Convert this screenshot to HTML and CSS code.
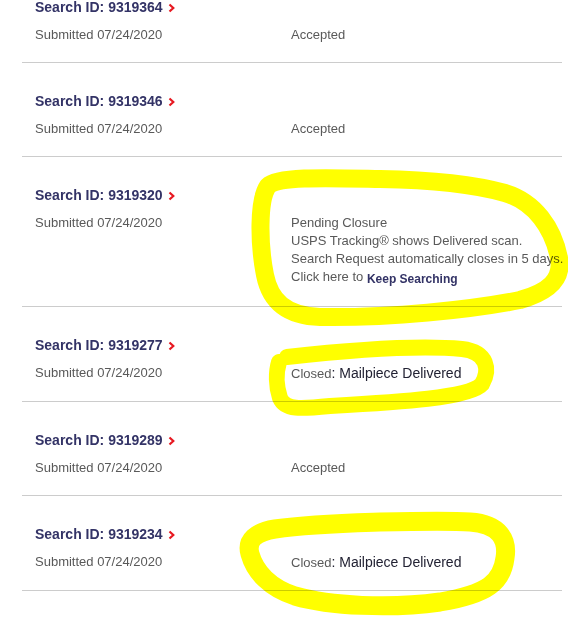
FILE: index.html
```html
<!DOCTYPE html>
<html>
<head>
<meta charset="utf-8">
<link rel="stylesheet" href="styles.css">
</head>
<body>
<div class="list">
  <div class="row">
    <div class="title">Search ID: 9319364<svg class="chev" width="7" height="10" viewBox="0 0 7 10"><path d="M1.5 1.5 L5.3 5 L1.5 8.5" /></svg></div>
    <div class="sub">Submitted 07/24/2020</div>
    <div class="status">Accepted</div>
  </div>
  <div class="row">
    <div class="title">Search ID: 9319346<svg class="chev" width="7" height="10" viewBox="0 0 7 10"><path d="M1.5 1.5 L5.3 5 L1.5 8.5" /></svg></div>
    <div class="sub">Submitted 07/24/2020</div>
    <div class="status">Accepted</div>
  </div>
  <div class="row">
    <div class="title">Search ID: 9319320<svg class="chev" width="7" height="10" viewBox="0 0 7 10"><path d="M1.5 1.5 L5.3 5 L1.5 8.5" /></svg></div>
    <div class="sub">Submitted 07/24/2020</div>
    <div class="status">
      <div>Pending Closure</div>
      <div>USPS Tracking® shows Delivered scan.</div>
      <div>Search Request automatically closes in 5 days.</div>
      <div class="keep-line">Click here to <a class="keep">Keep Searching</a></div>
    </div>
  </div>
  <div class="row">
    <div class="title">Search ID: 9319277<svg class="chev" width="7" height="10" viewBox="0 0 7 10"><path d="M1.5 1.5 L5.3 5 L1.5 8.5" /></svg></div>
    <div class="sub">Submitted 07/24/2020</div>
    <div class="status">Closed<span class="closed-detail">: Mailpiece Delivered</span></div>
  </div>
  <div class="row">
    <div class="title">Search ID: 9319289<svg class="chev" width="7" height="10" viewBox="0 0 7 10"><path d="M1.5 1.5 L5.3 5 L1.5 8.5" /></svg></div>
    <div class="sub">Submitted 07/24/2020</div>
    <div class="status">Accepted</div>
  </div>
  <div class="row">
    <div class="title">Search ID: 9319234<svg class="chev" width="7" height="10" viewBox="0 0 7 10"><path d="M1.5 1.5 L5.3 5 L1.5 8.5" /></svg></div>
    <div class="sub">Submitted 07/24/2020</div>
    <div class="status">Closed<span class="closed-detail">: Mailpiece Delivered</span></div>
  </div>
</div>
<svg class="marker" width="568" height="622" viewBox="0 0 568 622">
  <path class="m1" d="M380,179 C440,180 480,186 505,193 C535,202 553,228 559,258 C563,280 548,292 520,300 C470,310 390,318 320,317 C285,316 270,300 265,275 C259,245 258,200 268,186 C278,176 330,178 380,179 Z"/>
  <path class="m2" d="M287,357 C350,350 420,345 462,349 C488,352 490,370 482,384 C470,398 400,402 330,406 C300,409 285,410 280,398 C276,386 276,372 279,362"/>
  <path class="m3" d="M380,522 C430,521 455,521 470,522 C500,524 508,540 505,558 C502,582 488,594 440,602 C390,609 330,606 295,596 C270,588 255,572 250,554 C246,540 256,532 275,529 C310,524 350,523 380,522 Z"/>
</svg>
</body>
</html>
```

FILE: styles.css
```css
html, body {
  margin: 0;
  padding: 0;
  background: #ffffff;
}
body {
  position: relative;
  width: 568px;
  height: 622px;
  overflow: hidden;
  font-family: "Liberation Sans", Arial, sans-serif;
}
.list {
  margin-top: -31px;
  margin-left: 22px;
  width: 540px;
}
.row {
  display: grid;
  grid-template-columns: 256px 1fr;
  row-gap: 10px;
  padding: 29px 0 18px 13px;
  border-bottom: 1px solid #cccccc;
}
.row .title {
  grid-column: 1;
  grid-row: 1;
  font-size: 14px;
  font-weight: bold;
  line-height: 18px;
  color: #333366;
  white-space: nowrap;
}
.chev {
  margin-left: 5px;
  vertical-align: -1px;
}
.chev path {
  fill: none;
  stroke: #e71921;
  stroke-width: 2.2;
}
.row .sub {
  grid-column: 1;
  grid-row: 2;
  font-size: 13px;
  line-height: 18px;
  color: #595959;
}
.row .status {
  grid-column: 2;
  grid-row: 2;
  font-size: 13px;
  line-height: 18px;
  color: #595959;
  white-space: nowrap;
}
.keep {
  font-size: 12px;
  font-weight: bold;
  color: #333366;
  vertical-align: -2px;
}
.closed-detail {
  font-size: 14px;
  color: #222233;
}
.marker {
  position: absolute;
  left: 0;
  top: 0;
  pointer-events: none;
  mix-blend-mode: multiply;
}
.marker path {
  fill: none;
  stroke: #ffff00;
  stroke-linecap: round;
  stroke-linejoin: round;
}
.m1 { stroke-width: 18; }
.m2 { stroke-width: 16; }
.m3 { stroke-width: 19; }
```
